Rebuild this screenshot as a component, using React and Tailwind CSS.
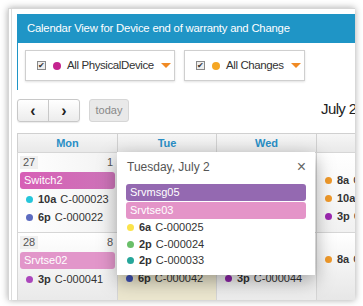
import React from 'react'

const font = { fontFamily: '"Liberation Sans", Arial, sans-serif' }

const Dot = ({ color }) => (
  <span className={`inline-block w-[7px] h-[7px] rounded-full mr-[5px] shrink-0 ${color}`} />
)

const Item = ({ color, time, code }) => (
  <div className="flex items-center h-[18px] pl-[8px] text-[11px] text-[#333] whitespace-nowrap">
    <Dot color={color} />
    <span className="font-bold mr-[4px]">{time}</span>
    <span>{code}</span>
  </div>
)

const Bar = ({ label, color }) => (
  <div className={`mx-[2px] h-[17px] rounded-[3px] px-[4px] text-[11px] leading-[17px] text-white ${color}`}>
    {label}
  </div>
)

const Caret = () => (
  <span className="ml-[7px] inline-block w-0 h-0 border-l-[5px] border-r-[5px] border-t-[5px] border-l-transparent border-r-transparent border-t-[#f08a24]" />
)

const Filter = ({ dot, label, width }) => (
  <div className={`flex items-center h-[31px] border border-[#cfcfcf] bg-white pl-[11px] whitespace-nowrap shadow-[0_1px_2px_rgba(0,0,0,0.12)] ${width}`}>
    <span className="w-[9px] h-[9px] border border-[#888] bg-[#eee] text-[8px] leading-[7px] text-[#333] flex items-center justify-center">✔</span>
    <span className={`ml-[7px] w-[8px] h-[8px] rounded-full ${dot}`} />
    <span className="ml-[6px] text-[11.5px] text-[#333] tracking-[-0.4px]">{label}</span>
    <Caret />
  </div>
)

const DayHead = ({ week, day }) => (
  <div className="flex justify-between items-start h-[19px] pt-[3px] pr-[4px] pl-[2px] text-[11px] text-[#555]">
    <span className="bg-[#f0f0f0] px-[3px] leading-[13px]">{week}</span>
    <span className="leading-[13px]">{day}</span>
  </div>
)

export default function App() {
  return (
    <div className="w-[363px] h-[306px] bg-white overflow-hidden" style={font}>
      <div className="ml-[8px] mt-[8px] w-[347px] h-[292px] bg-white border-l border-t border-[#d6d6d6] shadow-[0_0_7px_rgba(0,0,0,0.35)] overflow-hidden">
        <div className="ml-[2px] h-full border-l border-[#dcdcdc] pl-[5px] pt-[5px]">
          <div className="h-[29px] bg-[#1f95c6] pl-[10px] flex items-center text-white text-[11.3px] tracking-[-0.2px] whitespace-nowrap">
            Calendar View for Device end of warranty and Change
          </div>
          <div className="h-[47px] border-l border-[#1f95c6] flex gap-[9px] pl-[7px] pt-[7px]">
            <Filter dot="bg-[#c4248f]" label="All PhysicalDevice" width="w-[150px]" />
            <Filter dot="bg-[#f5a623]" label="All Changes" width="w-[121px]" />
          </div>
          <div className="h-[43px] flex items-start pt-[9px]">
            <div className="shrink-0 flex h-[23px] border border-[#c8c8c8] rounded-[3px] bg-gradient-to-b from-white to-[#ececec] shadow-[0_1px_1px_rgba(0,0,0,0.08)]">
              <span className="w-[31px] flex items-center justify-center border-r border-[#c8c8c8] text-[16px] font-bold text-[#222]">‹</span>
              <span className="w-[30px] flex items-center justify-center text-[16px] font-bold text-[#222]">›</span>
            </div>
            <div className="shrink-0 ml-[9px] h-[23px] w-[40px] border border-[#d6d6d6] rounded-[3px] bg-[#e9e9e9] text-[11px] text-[#888] flex items-center justify-center">
              today
            </div>
            <div className="shrink-0 ml-[192px] text-[15px] tracking-[-0.6px] text-[#222] leading-[18px] pt-[1px] whitespace-nowrap">July 2019</div>
          </div>
          <div className="relative w-[400px]">
            <div className="grid grid-cols-[100px_99px_100px_100px] h-[19px] border-t border-l border-[#d0d0d0] bg-gradient-to-b from-[#f6f6f6] to-[#e9e9e9] text-[11px] font-bold text-[#2a8fc6]">
              {['Mon', 'Tue', 'Wed', 'Thu'].map((d) => (
                <div key={d} className="border-r border-[#d0d0d0] flex items-center justify-center">{d}</div>
              ))}
            </div>
            <div className="grid grid-cols-[100px_99px_100px_100px] h-[80px] border-l border-t border-[#d6d6d6]">
              <div className="border-r border-[#d6d6d6] bg-gradient-to-r from-white to-[#f2f2f2]">
                <DayHead week="27" day="1" />
                <div className="mx-[2px] h-[17px] rounded-[3px] px-[4px] text-[11px] leading-[17px] text-white bg-gradient-to-r from-[#d75fb6] to-[#cc74b8]">Switch2</div>
                <div className="mt-[1px]">
                  <Item color="bg-[#26c6da]" time="10a" code="C-000023" />
                  <Item color="bg-[#5c6bc0]" time="6p" code="C-000022" />
                </div>
              </div>
              <div className="border-r border-[#d6d6d6]" />
              <div className="border-r border-[#d6d6d6]" />
              <div className="border-r border-[#d6d6d6] pt-[18px] bg-gradient-to-b from-white to-[#f1f1f1]">
                <Item color="bg-[#f0992a]" time="8a" code="C-000045" />
                <Item color="bg-[#f0992a]" time="10a" code="C-000046" />
                <Item color="bg-[#9c27b0]" time="3p" code="C-000047" />
              </div>
            </div>
            <div className="grid grid-cols-[100px_99px_100px_100px] h-[70px] border-l border-t border-[#d6d6d6]">
              <div className="border-r border-[#d6d6d6] bg-gradient-to-b from-white to-[#e9e9e9]">
                <DayHead week="28" day="8" />
                <Bar label="Srvtse02" color="bg-[#e296ca]" />
                <div className="mt-[1px]">
                  <Item color="bg-[#ab47bc]" time="3p" code="C-000041" />
                </div>
              </div>
              <div className="border-r border-[#d6d6d6] bg-[#ece7cf] pt-[36px]">
                <Item color="bg-[#3f51b5]" time="6p" code="C-000042" />
              </div>
              <div className="border-r border-[#d6d6d6] bg-gradient-to-b from-white to-[#ececec] pt-[36px]">
                <Item color="bg-[#8e24aa]" time="3p" code="C-000044" />
              </div>
              <div className="border-r border-[#d6d6d6] bg-gradient-to-b from-white to-[#e6e6e6] pt-[17px]">
                <Item color="bg-[#f0992a]" time="8a" code="C-000048" />
              </div>
            </div>
            <div className="absolute left-[100px] top-[19px] w-[198px] h-[123px] bg-white shadow-[0_6px_18px_rgba(0,0,0,0.35)] px-[10px] pt-[6px]">
              <div className="flex items-center justify-between text-[12px] text-[#555]">
                <span>Tuesday, July 2</span>
                <span className="text-[16px] leading-[14px] text-[#666] mr-[-1px]">×</span>
              </div>
              <div className="mt-[8px] -mx-[1px] flex flex-col gap-[1px]">
                <div className="h-[17px] rounded-[3px] px-[4px] text-[11px] leading-[17px] text-white bg-[#9469b1]">Srvmsg05</div>
                <div className="h-[17px] rounded-[3px] px-[4px] text-[11px] leading-[17px] text-white bg-[#e494c8]">Srvtse03</div>
              </div>
              <div className="-ml-[8px]">
                <div className="h-[17px] flex items-center"><Item color="bg-[#fbe34a]" time="6a" code="C-000025" /></div>
                <div className="h-[16px] flex items-center"><Item color="bg-[#6abf69]" time="2p" code="C-000024" /></div>
                <div className="h-[16px] flex items-center"><Item color="bg-[#26a69a]" time="2p" code="C-000033" /></div>
              </div>
            </div>
          </div>
        </div>
      </div>
    </div>
  )
}
